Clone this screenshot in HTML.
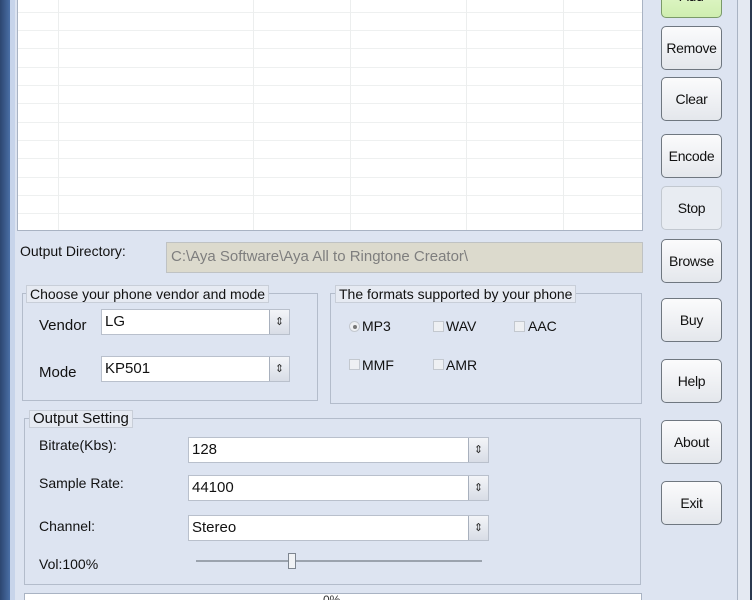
<!DOCTYPE html><html style="overflow:hidden;height:600px"><head><style>
body{margin:0;width:752px;height:600px;overflow:hidden;background:#dde4f1;font-family:"Liberation Sans",sans-serif;font-size:14px;color:#111;position:relative}
div{position:absolute;box-sizing:border-box}
.t{white-space:nowrap}
.list{left:17px;top:-2px;width:626px;height:233px;background:#fff;border:1px solid #a9b3c3;overflow:hidden}
.h{left:0;width:100%;height:1px;background:#eef0f0}
.v{top:0;height:100%;width:1px;background:#eceeee}
.btn{left:661px;width:61px;height:44px;border:1px solid #6f7780;border-radius:5px;background:linear-gradient(#fbfbfc,#e4e7ec);text-align:center;line-height:42px;font-size:14px;letter-spacing:-0.3px}
.grp{border:1px solid #b3bccb}
.leg{background:#e6eaf2;border:1px solid #c8ced8;padding:0 3px;font-size:14px;line-height:16px}
.cb{background:#fff;border:1px solid #b9c0cc;font-size:15px;padding-left:3px;line-height:23px}
.ar{right:0;top:0;width:20px;height:100%;background:linear-gradient(#f3f5f8,#d8dde6);border-left:1px solid #a8b0bd;font-size:11px;text-align:center;line-height:23px;color:#333;font-family:"DejaVu Sans",sans-serif}
.ck{width:11px;height:11px;border:1px solid #c3c8cf;background:#eef0f3}
</style></head><body>
<div style="left:0;top:0;width:10px;height:600px;background:linear-gradient(90deg,#2c4670,#4a6fa6)"></div>
<div style="left:10px;top:0;width:5px;height:600px;background:#c7d4ea"></div>
<div style="left:737px;top:0;width:1px;height:600px;background:#a9b3c3"></div>
<div style="left:738px;top:0;width:12px;height:600px;background:#e4e9f2"></div>
<div style="left:750px;top:0;width:2px;height:600px;background:#2b3a50"></div>
<div class="list">
<div class="h" style="top:13px"></div><div class="h" style="top:31px"></div><div class="h" style="top:49px"></div><div class="h" style="top:68px"></div><div class="h" style="top:86px"></div><div class="h" style="top:104px"></div><div class="h" style="top:123px"></div><div class="h" style="top:141px"></div><div class="h" style="top:159px"></div><div class="h" style="top:178px"></div><div class="h" style="top:196px"></div><div class="h" style="top:214px"></div>
<div class="v" style="left:40px"></div><div class="v" style="left:235px"></div><div class="v" style="left:332px"></div><div class="v" style="left:448px"></div><div class="v" style="left:545px"></div>
</div>
<div class="t" style="left:20px;top:243px">Output Directory:</div>
<div style="left:166px;top:242px;width:477px;height:31px;background:#dcdacd;border:1px solid #bfc2c3;color:#7e7e7e;font-size:15px;line-height:28px;padding-left:4px" class="t">C:\Aya Software\Aya All to Ringtone Creator\</div>
<div class="grp" style="left:22px;top:293px;width:296px;height:108px"></div>
<div class="leg t" style="left:26px;top:285px">Choose your phone vendor and mode</div>
<div class="t" style="left:39px;top:317px;font-size:15px">Vendor</div>
<div class="cb t" style="left:101px;top:309px;width:189px;height:26px">LG<div class="ar">⇕</div></div>
<div class="t" style="left:39px;top:364px;font-size:15px">Mode</div>
<div class="cb t" style="left:101px;top:356px;width:189px;height:26px">KP501<div class="ar">⇕</div></div>
<div class="grp" style="left:330px;top:293px;width:312px;height:111px"></div>
<div class="leg t" style="left:335px;top:285px">The formats supported by your phone</div>
<div class="ck" style="left:349px;top:321px;border-radius:50%"><div style="left:3px;top:3px;width:4px;height:4px;background:#777;border-radius:50%"></div></div>
<div class="t" style="left:362px;top:318px">MP3</div>
<div class="ck" style="left:433px;top:321px"></div><div class="t" style="left:446px;top:318px">WAV</div>
<div class="ck" style="left:514px;top:321px"></div><div class="t" style="left:528px;top:318px">AAC</div>
<div class="ck" style="left:349px;top:359px"></div><div class="t" style="left:362px;top:357px">MMF</div>
<div class="ck" style="left:433px;top:359px"></div><div class="t" style="left:446px;top:357px">AMR</div>
<div class="grp" style="left:24px;top:418px;width:617px;height:167px"></div>
<div class="leg t" style="left:29px;top:410px;font-size:15px">Output Setting</div>
<div class="t" style="left:39px;top:437px">Bitrate(Kbs):</div>
<div class="cb t" style="left:188px;top:437px;width:301px;height:26px">128<div class="ar">⇕</div></div>
<div class="t" style="left:39px;top:475px">Sample Rate:</div>
<div class="cb t" style="left:188px;top:475px;width:301px;height:26px">44100<div class="ar">⇕</div></div>
<div class="t" style="left:39px;top:518px">Channel:</div>
<div class="cb t" style="left:188px;top:515px;width:301px;height:26px">Stereo<div class="ar">⇕</div></div>
<div class="t" style="left:39px;top:556px">Vol:100%</div>
<div style="left:196px;top:560px;width:286px;height:2px;background:#9ba3ae"></div>
<div style="left:288px;top:553px;width:8px;height:16px;background:#f0f2f5;border:1px solid #7d8590"></div>
<div style="left:24px;top:593px;width:618px;height:7px;background:#fff;border:1px solid #a9b3c3;border-bottom:none;overflow:hidden"><div class="t" style="left:298px;top:0px;font-size:12px;line-height:12px;color:#333">0%</div></div>
<div class="btn" style="top:-26px;background:linear-gradient(#eafbd6,#cfeeb0);border-color:#7a9a6a">Add</div>
<div class="btn" style="top:26px">Remove</div>
<div class="btn" style="top:77px">Clear</div>
<div class="btn" style="top:134px">Encode</div>
<div class="btn" style="top:186px;border-color:#c2c8d0;background:#e8ecf2">Stop</div>
<div class="btn" style="top:239px">Browse</div>
<div class="btn" style="top:298px">Buy</div>
<div class="btn" style="top:359px">Help</div>
<div class="btn" style="top:420px">About</div>
<div class="btn" style="top:481px">Exit</div>
</body></html>
